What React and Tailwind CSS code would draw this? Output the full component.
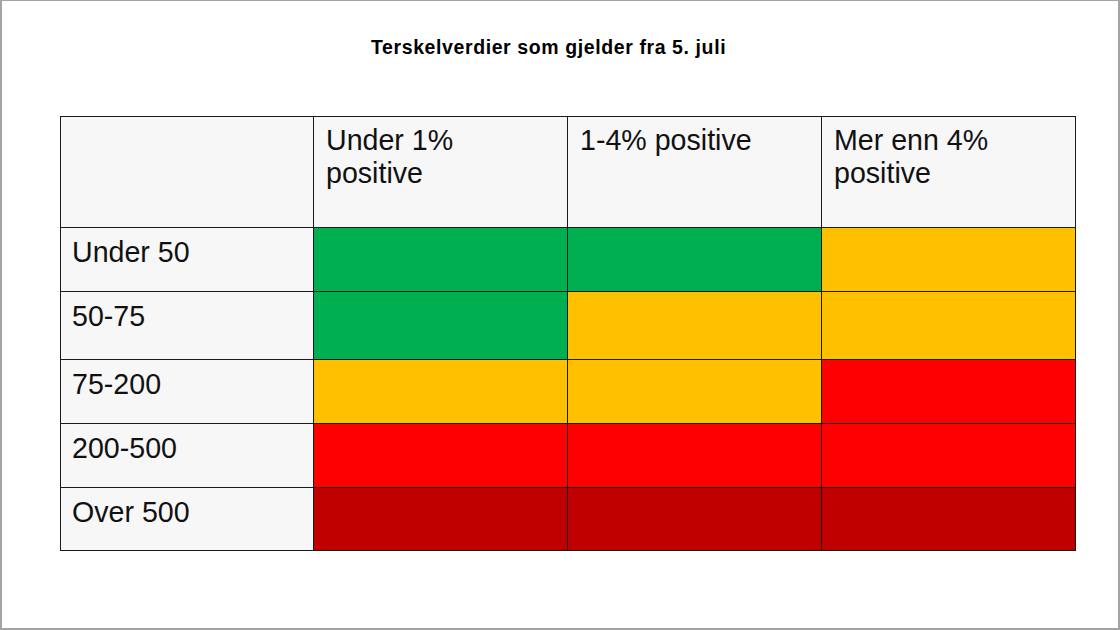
import React from 'react';

// Terskelverdier-tabell: rader = smittetall, kolonner = andel positive
const columns = ['Under 1% positive', '1-4% positive', 'Mer enn 4% positive'];

const rows = [
  { label: 'Under 50', cells: ['green', 'green', 'yellow'], h: 'h-[63px]' },
  { label: '50-75', cells: ['green', 'yellow', 'yellow'], h: 'h-[67px]' },
  { label: '75-200', cells: ['yellow', 'yellow', 'red'], h: 'h-[63px]' },
  { label: '200-500', cells: ['red', 'red', 'red'], h: 'h-[63px]' },
  { label: 'Over 500', cells: ['darkred', 'darkred', 'darkred'], h: 'h-[62px]' }
];

const colorClass = {
  green: 'bg-[#00b050]',
  yellow: 'bg-[#ffc000]',
  red: 'bg-[#ff0000]',
  darkred: 'bg-[#c00000]'
};

export default function App() {
  return (
    <div
      className="w-[1120px] h-[630px] bg-white border-2 border-t border-[#a3a3a3] text-black"
      style={{ fontFamily: '"Liberation Sans", Arial, sans-serif' }}
    >
      <div className="pt-[35px] pl-[369px] h-[115px]">
        <h1 className="text-[19.5px] leading-[22px] font-bold tracking-[0.6px]">
          Terskelverdier som gjelder fra 5. juli
        </h1>
      </div>

      <div className="ml-[58px] w-[1016px] p-px bg-[#1a1a1a] grid grid-cols-[252px_253px_253px_253px] gap-px text-[28.6px] leading-[33px] text-[#111]">
        {/* Overskriftsrad */}
        <div className="h-[110px] bg-[#f7f7f7]" />
        {columns.map((c) => (
          <div key={c} className="h-[110px] bg-[#f7f7f7] pl-[12px] pr-[14px] pt-[7px]">
            {c}
          </div>
        ))}

        {rows.map((r) => (
          <React.Fragment key={r.label}>
            <div className={`${r.h} bg-[#f7f7f7] pl-[11px] pt-2`}>{r.label}</div>
            {r.cells.map((c, i) => (
              <div key={i} className={`${r.h} ${colorClass[c]}`} />
            ))}
          </React.Fragment>
        ))}
      </div>
    </div>
  );
}
